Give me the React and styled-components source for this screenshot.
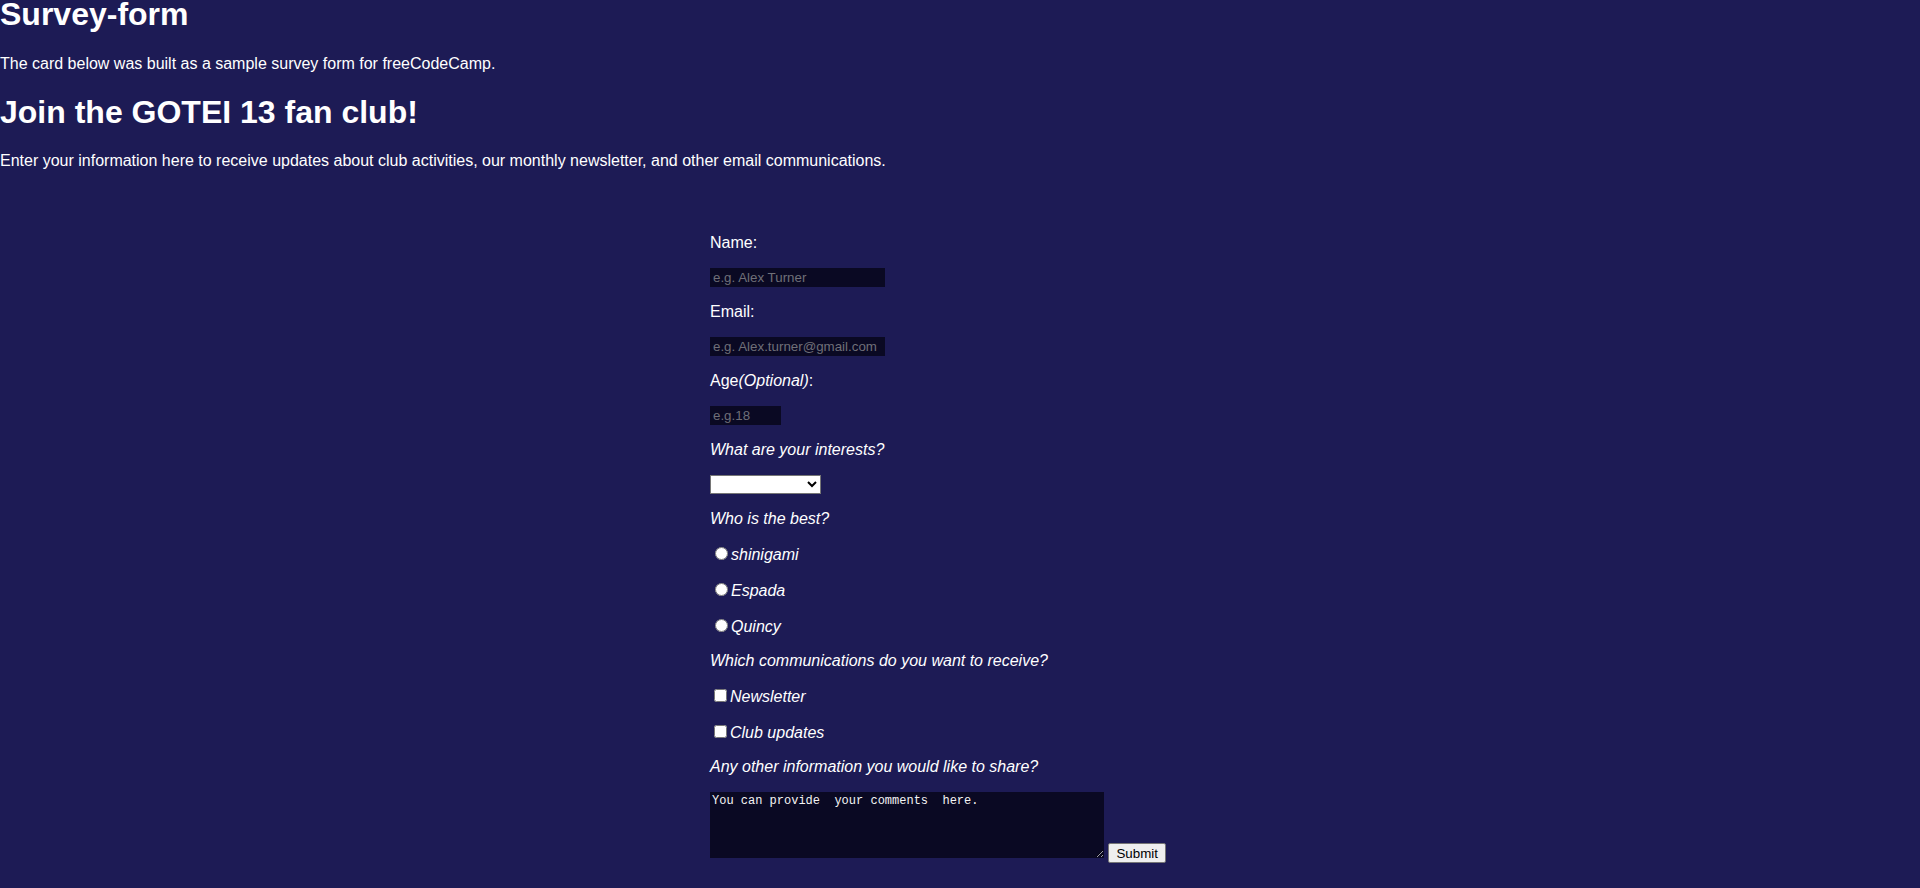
import React from 'react';
import styled, { createGlobalStyle } from 'styled-components';

const GlobalStyle = createGlobalStyle`
  html, body {
    margin: 0;
    background: #1d1b55;
  }
  body {
    color: #ffffff;
    font-family: "Liberation Sans", Arial, sans-serif;
    font-size: 16px;
    min-height: 888px;
  }
`;

const Page = styled.div`
  display: flow-root;
`;

const Title = styled.h1`
  font-size: 32px;
  line-height: 29px;
  margin: 0 0 25.5px;
`;

const Heading = styled.h2`
  font-size: 32px;
  margin: 21.44px 0;
`;

const Intro = styled.p`
  margin: 16px 0;
`;

const Form = styled.form`
  width: 500px;
  margin: 63.5px auto 0;
`;

const FieldLabel = styled.label`
  display: block;
  margin: 16px 0;
  font-style: ${(p) => (p.$italic ? 'italic' : 'normal')};
`;

const TextInput = styled.input`
  display: block;
  box-sizing: border-box;
  width: ${(p) => p.$width}px;
  height: 19px;
  margin: 16px 0;
  padding: 1px 3px;
  border: none;
  background: #0a0923;
  color: #ffffff;
  font-family: "Liberation Sans", Arial, sans-serif;
  font-size: 13.33px;
  outline: none;

  &::placeholder {
    color: #6f6f78;
  }
`;

const Select = styled.select`
  display: block;
  box-sizing: border-box;
  width: 111px;
  height: 19px;
  margin: 16px 0;
  font-family: "Liberation Sans", Arial, sans-serif;
  font-size: 13.33px;
  background: #ffffff;
`;

const ChoiceRow = styled.label`
  display: block;
  margin: 16px 0;
  font-style: italic;
`;

const CommentRow = styled.div`
  margin: 16px 0 0;
`;

const Comments = styled.textarea`
  box-sizing: border-box;
  width: 394px;
  height: 66px;
  padding: 2px;
  border: none;
  background: #0a0923;
  color: #f4f4f4;
  font-family: "Liberation Mono", "DejaVu Sans Mono", monospace;
  font-size: 12px;
  outline: none;
`;

const SubmitButton = styled.button`
  box-sizing: border-box;
  height: 20px;
  padding: 0 7px;
  border: 1px solid #767676;
  border-radius: 2px;
  background: #efefef;
  color: #000000;
  font-family: "Liberation Sans", Arial, sans-serif;
  font-size: 13.33px;
`;

export default function App() {
  return (
    <>
      <GlobalStyle />
      <Page>
        <Title>Survey-form</Title>
        <Intro>The card below was built as a sample survey form for freeCodeCamp.</Intro>
        <Heading>Join the GOTEI 13 fan club!</Heading>
        <Intro>
          Enter your information here to receive updates about club activities, our monthly newsletter, and other email communications.
        </Intro>

        <Form onSubmit={(e) => e.preventDefault()}>
          <FieldLabel htmlFor="name">Name:</FieldLabel>
          <TextInput id="name" type="text" $width={175} placeholder="e.g. Alex Turner" />

          <FieldLabel htmlFor="email">Email:</FieldLabel>
          <TextInput id="email" type="email" $width={175} placeholder="e.g. Alex.turner@gmail.com" />

          <FieldLabel htmlFor="age">
            Age<i>(Optional)</i>:
          </FieldLabel>
          <TextInput id="age" type="number" $width={71} placeholder="e.g.18" />

          <FieldLabel htmlFor="interests" $italic>What are your interests?</FieldLabel>
          <Select id="interests" defaultValue="">
            <option value=""></option>
            <option value="anime">Anime</option>
            <option value="manga">Manga</option>
            <option value="games">Games</option>
          </Select>

          <FieldLabel $italic>Who is the best?</FieldLabel>
          <ChoiceRow><input type="radio" name="best" value="shinigami" />shinigami</ChoiceRow>
          <ChoiceRow><input type="radio" name="best" value="espada" />Espada</ChoiceRow>
          <ChoiceRow><input type="radio" name="best" value="quincy" />Quincy</ChoiceRow>

          <FieldLabel $italic>Which communications do you want to receive?</FieldLabel>
          <ChoiceRow><input type="checkbox" value="newsletter" />Newsletter</ChoiceRow>
          <ChoiceRow><input type="checkbox" value="updates" />Club updates</ChoiceRow>

          <FieldLabel htmlFor="comments" $italic>Any other information you would like to share?</FieldLabel>
          <CommentRow>
            <Comments id="comments" defaultValue="You can provide  your comments  here." />{' '}
            <SubmitButton type="submit">Submit</SubmitButton>
          </CommentRow>
        </Form>
      </Page>
    </>
  );
}
